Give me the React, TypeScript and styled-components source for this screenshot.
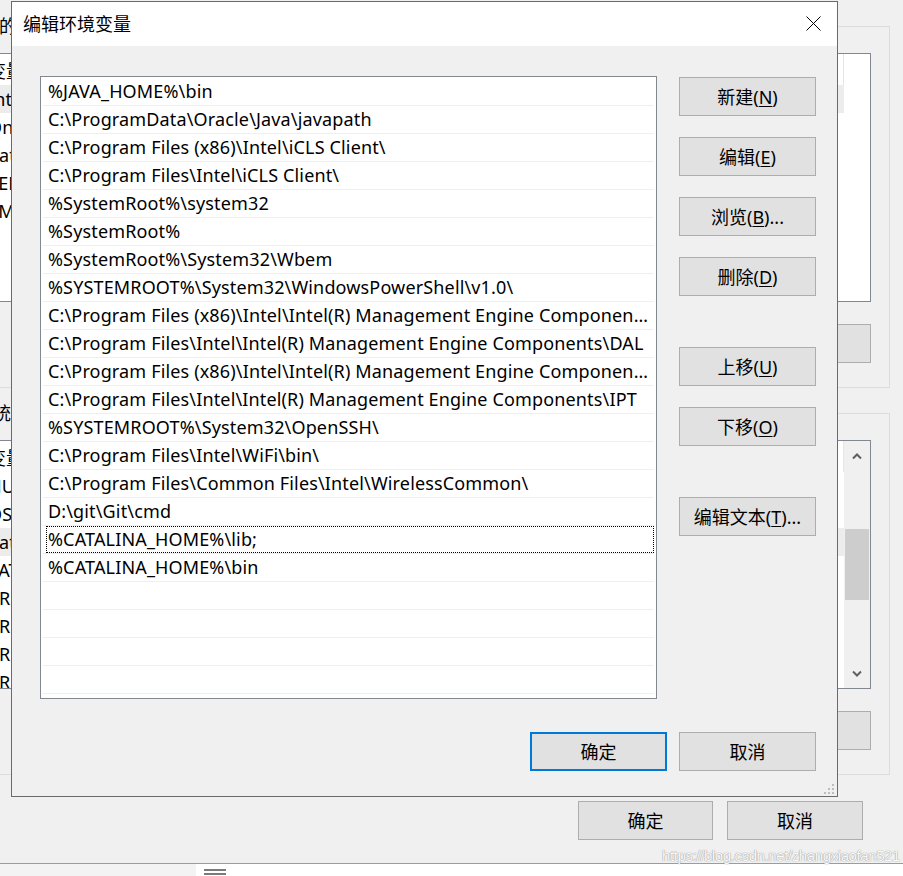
import React from "react";
import styled, { createGlobalStyle } from "styled-components";

const UI = `"Noto Sans", "Noto Sans CJK SC", sans-serif`;

const GlobalStyle = createGlobalStyle`
  html, body { margin: 0; padding: 0; background: #f0f0f0; }
  body { font-family: ${UI}; color: #000; }
`;

const Stage = styled.div`
  position: relative;
  width: 903px;
  height: 876px;
  overflow: hidden;
  background: #f0f0f0;
  display: flex;
  flex-direction: column;
`;

/* ---------- parent window (环境变量) behind the dialog ---------- */

const ParentWindow = styled.div`
  flex: none;
  height: 864px;
  width: 937px;
  margin-left: -34px;
  box-sizing: border-box;
  padding-top: 14px;
  border-bottom: 1px solid #9c9c9c;
  display: flex;
  flex-direction: column;
  align-items: flex-start;
`;

const GroupBox = styled.fieldset`
  margin: 0;
  min-width: 0;
  width: 924px;
  box-sizing: border-box;
  border: 1px solid #dcdcdc;
  padding: 15px 18px 24px 4px;
  & + & { margin-top: 13px; }
`;

const Legend = styled.legend<{ $indent: number }>`
  padding: 0 2px;
  margin-left: ${p => p.$indent}px;
  font-size: 18px;
  line-height: 24px;
`;

const VarList = styled.div`
  margin-left: 15px;
  width: 885px;
  height: 249px;
  box-sizing: border-box;
  border: 1px solid #828790;
  background: #fff;
  display: flex;
  overflow: hidden;
`;

const Columns = styled.div`
  flex: none;
  width: 857px;
  display: flex;
  flex-direction: column;
`;

const HeaderRow = styled.div`
  display: grid;
  grid-template-columns: 220px 637px;
  height: 31px;
  flex: none;
`;

const HeaderCell = styled.div`
  padding-left: 1px;
  border-right: 1px solid #e5e5e5;
  display: flex;
  align-items: center;
  font-size: 18px;
  white-space: nowrap;
  overflow: hidden;
`;

const VarRow = styled.div<{ $selected?: boolean }>`
  display: grid;
  grid-template-columns: 220px 637px;
  height: 28px;
  flex: none;
  align-items: center;
  background: ${p => (p.$selected ? "#ececec" : "transparent")};
`;

const VarCell = styled.div`
  padding-left: 1px;
  font-size: 18px;
  letter-spacing: 0.15px;
  white-space: nowrap;
  overflow: hidden;
`;

const Scrollbar = styled.div`
  flex: none;
  width: 26px;
  background: #f0f0f0;
  display: flex;
  flex-direction: column;
`;

const ArrowBox = styled.div`
  height: 30px;
  display: flex;
  align-items: center;
  justify-content: center;
  flex: none;
`;

const Track = styled.div`
  flex: 1;
`;

const Thumb = styled.div`
  margin: 58px 1px 0 1px;
  height: 71px;
  background: #cdcdcd;
`;

const ButtonRow = styled.div`
  display: flex;
  justify-content: flex-end;
  gap: 12px;
  margin-top: 22px;
`;

const WinButton = styled.button<{ $primary?: boolean; $width?: number }>`
  flex: none;
  width: ${p => p.$width ?? 137}px;
  height: 39px;
  box-sizing: border-box;
  padding: 0;
  border: ${p => (p.$primary ? "2px solid #0078d7" : "1px solid #adadad")};
  background: #e1e1e1;
  color: #000;
  font-family: ${UI};
  font-size: 18px;
  line-height: 1;
  white-space: nowrap;
`;

const Key = styled.span`
  text-decoration: underline;
  text-underline-offset: 2px;
  text-decoration-thickness: 1px;
`;

const ParentFooter = styled.div`
  width: 924px;
  box-sizing: border-box;
  padding-right: 27px;
  margin-top: 26px;
  display: flex;
  justify-content: flex-end;
  gap: 14px;
`;

const Taskbar = styled.div`
  flex: 1;
  display: flex;
  background: #fff;
`;

const TaskbarSide = styled.div`
  width: 196px;
  background: #f3f3f3;
`;

const TaskbarMenu = styled.div`
  margin-left: 8px;
  margin-top: -2px;
`;

const Watermark = styled.div`
  position: absolute;
  right: 3px;
  top: 847px;
  font-family: "Liberation Sans", sans-serif;
  font-size: 15px;
  letter-spacing: -0.4px;
  color: rgba(255, 255, 255, 0.95);
  text-shadow: 0 0 1px #9a9a9a, 0 0 1px #9a9a9a;
`;

/* ---------- the dialog (编辑环境变量) ---------- */

const Dialog = styled.div`
  position: absolute;
  left: 11px;
  top: 1px;
  width: 827px;
  box-sizing: border-box;
  border: 1px solid #6a6a6a;
  background: #f0f0f0;
  display: flex;
  flex-direction: column;
`;

const TitleBar = styled.div`
  height: 44px;
  background: #fff;
  display: flex;
  align-items: center;
  justify-content: space-between;
  padding-left: 11px;
`;

const Title = styled.div`
  font-family: "Noto Sans CJK SC", sans-serif;
  font-size: 18px;
  margin-top: -3px;
`;

const CloseBox = styled.div`
  width: 47px;
  height: 44px;
  display: flex;
  align-items: center;
  justify-content: center;
  margin-top: -2px;
`;

const Body = styled.div`
  padding: 30px 21px 25px 28px;
  display: flex;
  flex-direction: column;
`;

const MainRow = styled.div`
  display: flex;
  gap: 22px;
  align-items: flex-start;
`;

const PathList = styled.div`
  width: 617px;
  height: 623px;
  box-sizing: border-box;
  border: 1px solid #828790;
  background: #fff;
  padding: 1px 2px;
  overflow: hidden;
`;

const PathRow = styled.div<{ $focused?: boolean }>`
  position: relative;
  height: 28px;
  box-sizing: border-box;
  border-bottom: 1px solid #efefef;
  padding: 0 3px 0 5px;
  font-size: 18px;
  letter-spacing: 0.15px;
  line-height: 27px;
  white-space: nowrap;
  overflow: hidden;
  text-overflow: ellipsis;
  &::after {
    content: "";
    display: ${p => (p.$focused ? "block" : "none")};
    position: absolute;
    left: 3px;
    right: 0;
    top: 0;
    bottom: 0;
    border: 1px dotted #000;
  }
`;

const SideButtons = styled.div`
  width: 137px;
  margin-top: 1px;
  display: flex;
  flex-direction: column;
  gap: 51px;
`;

const ButtonStack = styled.div`
  display: flex;
  flex-direction: column;
  gap: 21px;
`;

const DialogFooter = styled.div`
  display: flex;
  justify-content: flex-end;
  gap: 12px;
  margin-top: 33px;
`;

const Grip = styled.svg`
  position: absolute;
  right: 3px;
  bottom: 2px;
`;

const paths = [
  "%JAVA_HOME%\\bin",
  "C:\\ProgramData\\Oracle\\Java\\javapath",
  "C:\\Program Files (x86)\\Intel\\iCLS Client\\",
  "C:\\Program Files\\Intel\\iCLS Client\\",
  "%SystemRoot%\\system32",
  "%SystemRoot%",
  "%SystemRoot%\\System32\\Wbem",
  "%SYSTEMROOT%\\System32\\WindowsPowerShell\\v1.0\\",
  "C:\\Program Files (x86)\\Intel\\Intel(R) Management Engine Components\\DAL",
  "C:\\Program Files\\Intel\\Intel(R) Management Engine Components\\DAL",
  "C:\\Program Files (x86)\\Intel\\Intel(R) Management Engine Components\\IPT",
  "C:\\Program Files\\Intel\\Intel(R) Management Engine Components\\IPT",
  "%SYSTEMROOT%\\System32\\OpenSSH\\",
  "C:\\Program Files\\Intel\\WiFi\\bin\\",
  "C:\\Program Files\\Common Files\\Intel\\WirelessCommon\\",
  "D:\\git\\Git\\cmd",
  "%CATALINA_HOME%\\lib;",
  "%CATALINA_HOME%\\bin",
  "",
  "",
  "",
  "",
];

const userVars = [
  ["IntelliJ IDEA", "C:\\Program Files\\JetBrains\\IntelliJ IDEA 2019.2\\bin;"],
  ["OneDrive", "C:\\Users\\zhang\\OneDrive"],
  ["Path", "C:\\Users\\zhang\\AppData\\Local\\Microsoft\\WindowsApps;"],
  ["TEMP", "%USERPROFILE%\\AppData\\Local\\Temp"],
  ["TMP", "%USERPROFILE%\\AppData\\Local\\Temp"],
];

const systemVars = [
  ["NUMBER_OF_PROCESSORS", "8"],
  ["OS", "Windows_NT"],
  ["Path", "%JAVA_HOME%\\bin;C:\\ProgramData\\Oracle\\Java\\javapath;"],
  ["PATHEXT", ".COM;.EXE;.BAT;.CMD;.VBS;.VBE;.JS;.JSE;.WSF;.WSH;.MSC"],
  ["PROCESSOR_ARCHITECTURE", "AMD64"],
  ["PROCESSOR_IDENTIFIER", "Intel64 Family 6 Model 142 Stepping 10"],
  ["PROCESSOR_LEVEL", "6"],
  ["PROCESSOR_REVISION", "8e0a"],
];

const Chevron = ({ down }: { down?: boolean }) => (
  <svg width="10" height="7" viewBox="0 0 10 7">
    <polyline
      points={down ? "1,1.5 5,5.5 9,1.5" : "1,5.5 5,1.5 9,5.5"}
      fill="none"
      stroke="#606060"
      strokeWidth="2"
    />
  </svg>
);

const App: React.FC = () => (
  <>
    <GlobalStyle />
    <Stage>
      <ParentWindow>
        <GroupBox>
          <Legend $indent={26}>的用户变量(U)</Legend>
          <VarList>
            <Columns>
              <HeaderRow>
                <HeaderCell>变量</HeaderCell>
                <HeaderCell>值</HeaderCell>
              </HeaderRow>
              {userVars.map(([name, value], i) => (
                <VarRow key={name} $selected={i === 0}>
                  <VarCell>{name}</VarCell>
                  <VarCell>{value}</VarCell>
                </VarRow>
              ))}
            </Columns>
          </VarList>
          <ButtonRow>
            <WinButton>新建(<Key>N</Key>)...</WinButton>
            <WinButton>编辑(<Key>E</Key>)...</WinButton>
            <WinButton>删除(<Key>D</Key>)</WinButton>
          </ButtonRow>
        </GroupBox>

        <GroupBox>
          <Legend $indent={2}>系统变量(S)</Legend>
          <VarList>
            <Columns>
              <HeaderRow>
                <HeaderCell>变量</HeaderCell>
                <HeaderCell>值</HeaderCell>
              </HeaderRow>
              {systemVars.map(([name, value], i) => (
                <VarRow key={name} $selected={i === 2}>
                  <VarCell>{name}</VarCell>
                  <VarCell>{value}</VarCell>
                </VarRow>
              ))}
            </Columns>
            <Scrollbar>
              <ArrowBox>
                <Chevron />
              </ArrowBox>
              <Track>
                <Thumb />
              </Track>
              <ArrowBox>
                <Chevron down />
              </ArrowBox>
            </Scrollbar>
          </VarList>
          <ButtonRow>
            <WinButton>新建(<Key>W</Key>)...</WinButton>
            <WinButton>编辑(<Key>I</Key>)...</WinButton>
            <WinButton>删除(<Key>L</Key>)</WinButton>
          </ButtonRow>
        </GroupBox>

        <ParentFooter>
          <WinButton $width={135}>确定</WinButton>
          <WinButton $width={136}>取消</WinButton>
        </ParentFooter>
      </ParentWindow>

      <Taskbar>
        <TaskbarSide />
        <TaskbarMenu>
          <svg width="22" height="10" viewBox="0 0 22 10">
            <rect x="0" y="0" width="22" height="2" fill="#7a7a7a" />
            <rect x="0" y="4" width="22" height="2" fill="#7a7a7a" />
            <rect x="0" y="8" width="22" height="2" fill="#7a7a7a" />
          </svg>
        </TaskbarMenu>
      </Taskbar>

      <Watermark>https://blog.csdn.net/zhangxiaofan521</Watermark>

      <Dialog>
        <TitleBar>
          <Title>编辑环境变量</Title>
          <CloseBox>
            <svg width="15" height="15" viewBox="0 0 15 15">
              <path d="M0.5 0.5 L14.5 14.5 M14.5 0.5 L0.5 14.5" stroke="#000" strokeWidth="1" />
            </svg>
          </CloseBox>
        </TitleBar>
        <Body>
          <MainRow>
            <PathList>
              {paths.map((p, i) => (
                <PathRow key={i} $focused={i === 16}>
                  {p}
                </PathRow>
              ))}
            </PathList>
            <SideButtons>
              <ButtonStack>
                <WinButton>新建(<Key>N</Key>)</WinButton>
                <WinButton>编辑(<Key>E</Key>)</WinButton>
                <WinButton>浏览(<Key>B</Key>)...</WinButton>
                <WinButton>删除(<Key>D</Key>)</WinButton>
              </ButtonStack>
              <ButtonStack>
                <WinButton>上移(<Key>U</Key>)</WinButton>
                <WinButton>下移(<Key>O</Key>)</WinButton>
              </ButtonStack>
              <ButtonStack>
                <WinButton>编辑文本(<Key>T</Key>)...</WinButton>
              </ButtonStack>
            </SideButtons>
          </MainRow>
          <DialogFooter>
            <WinButton $primary>确定</WinButton>
            <WinButton>取消</WinButton>
          </DialogFooter>
        </Body>
        <Grip width="10" height="10" viewBox="0 0 10 10">
          {[
            [8, 0],
            [4, 4],
            [8, 4],
            [0, 8],
            [4, 8],
            [8, 8],
          ].map(([x, y]) => (
            <rect key={`${x}-${y}`} x={x} y={y} width="2" height="2" fill="#bdbdbd" />
          ))}
        </Grip>
      </Dialog>
    </Stage>
  </>
);

export default App;
